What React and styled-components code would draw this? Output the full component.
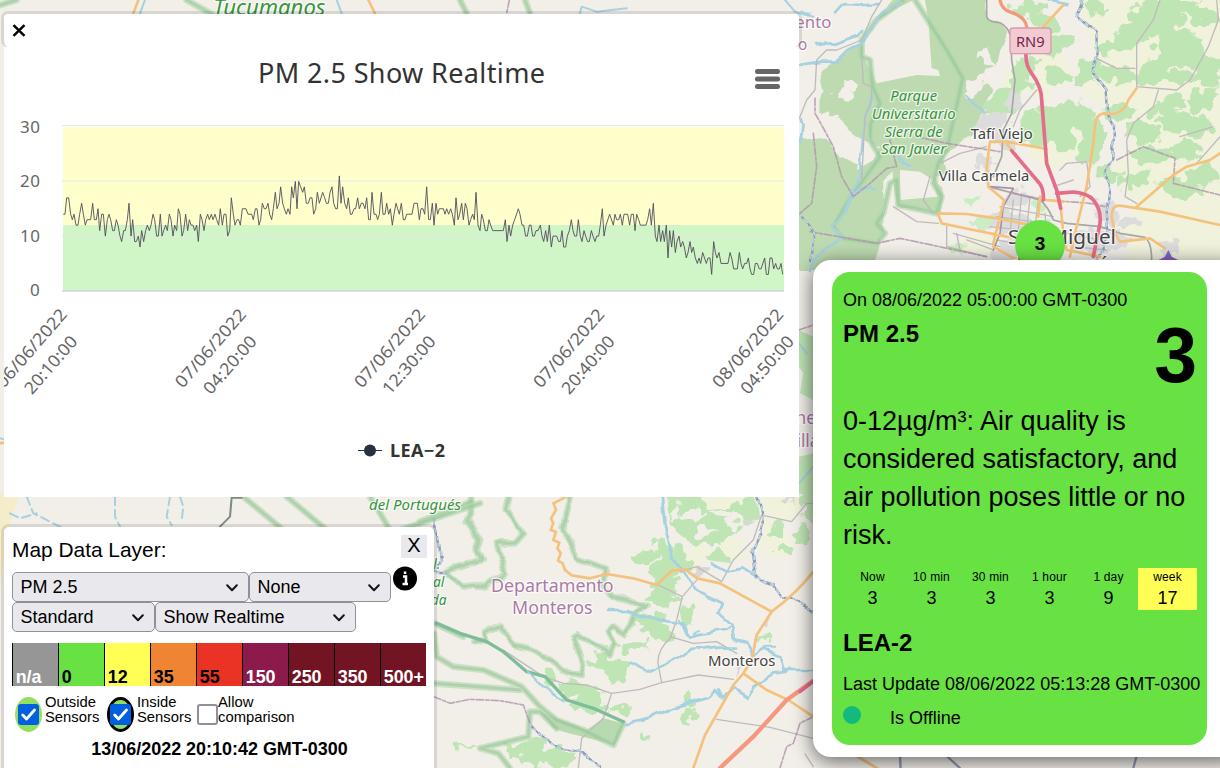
import React from "react";
import styled, { createGlobalStyle } from "styled-components";

const GlobalStyle = createGlobalStyle`
  * { box-sizing: border-box; }
  body { margin: 0; overflow: hidden; font-family: "Liberation Sans", Arial, sans-serif; color: #000; }
`;

const Page = styled.div`
  position: relative;
  width: 1220px;
  height: 768px;
  overflow: hidden;
  background: #f2efe9;
`;

const MapSvg = styled.svg`
  position: absolute;
  inset: 0;
  text { font-family: "Noto Sans", sans-serif; paint-order: stroke; stroke-linejoin: round; }
  path { fill: none; stroke-linejoin: round; stroke-linecap: round; }
`;

const GREEN = "#68e143";

/* ---------- map ---------- */

const Label = ({ x, y, size = 43, fill = "#444", italic, w, children }) => (
  <text x={x} y={y} fontSize={size} fill={fill} stroke="#fff" strokeOpacity=".7" strokeWidth="8"
    fontStyle={italic ? "italic" : "normal"} textAnchor="middle" textLength={w} lengthAdjust="spacingAndGlyphs">
    {children}
  </text>
);

// Filters that roughen the outline of fields and the course of rivers
const Rough = () => (
  <defs>
    <filter id="rough" filterUnits="userSpaceOnUse" x="-100" y="-100" width="1500" height="1100" colorInterpolationFilters="sRGB">
      <feTurbulence type="fractalNoise" baseFrequency="0.03" numOctaves="2" seed="4" />
      <feDisplacementMap in="SourceGraphic" scale="60" xChannelSelector="R" yChannelSelector="G" />
    </filter>
    <filter id="meander" filterUnits="userSpaceOnUse" x="-100" y="-100" width="1500" height="1100" colorInterpolationFilters="sRGB">
      <feTurbulence type="fractalNoise" baseFrequency="0.022" numOctaves="1" seed="9" />
      <feDisplacementMap in="SourceGraphic" scale="26" xChannelSelector="R" yChannelSelector="G" />
    </filter>
  </defs>
);

// Woodland or farmland patches: [x, y, width, height]
const Patches = ({ items, fill }) => (
  <g fill={fill} filter="url(#rough)">
    {items.map(([x, y, w, h], i) => {
      const n = 11;
      const pts = Array.from({ length: n }, (_, k) => {
        const a = (k / n) * Math.PI * 2;
        const r = 0.48 + 0.13 * Math.sin(k * 5.3 + i * 2.7);
        return `${(x + w / 2 + Math.cos(a) * w * r * 1.15).toFixed(1)},${(y + h / 2 + Math.sin(a) * h * r * 1.15).toFixed(1)}`;
      });
      return <polygon key={i} points={pts.join(" ")} />;
    })}
  </g>
);

const Park = ({ d }) => (
  <>
    <path d={d} stroke="#b2d6ac" strokeWidth="20" opacity=".6" />
    <path d={d} stroke="#8fc495" strokeWidth="9" opacity=".5" />
  </>
);
const Road = ({ d, c = "#f5c27d", w = 8 }) => <path d={d} stroke={c} strokeWidth={w} />;
const River = ({ d, w = 8, dash }) => <path d={d} stroke="#a5d1e0" strokeWidth={w} strokeDasharray={dash} filter="url(#meander)" />;
const Minor = ({ d }) => <path d={d} stroke="#bfbbbd" strokeWidth="4" />;
const Boundary = ({ d }) => <path d={d} stroke="#b193ae" strokeWidth="5" strokeDasharray="22 6 10 6" opacity=".8" />;
const Frontier = ({ d }) => (
  <g filter="url(#meander)">
    <path d={d} stroke="#9496b5" strokeWidth="7" />
    <path d={d} stroke="#b5dce8" strokeWidth="5" strokeDasharray="9 13" />
  </g>
);

const NorthEast = () => (
  <g transform="translate(800 0) scale(.33333)">
    <polygon fill="#f1f2dc" points="960,0 1260,0 1260,810 1000,810 960,700 1000,620 940,500 1000,430 960,350 930,240 890,150 850,70 830,0" />
    <Patches fill="#f1f2dc" items={[[690,60,90,60],[700,150,100,100],[700,380,160,110],[860,200,90,130],[700,230,60,60],[1030,630,190,130],[600,220,90,60],[500,700,100,60]]} />
    <g filter="url(#meander)">
      <polygon fill="#bddab1" points="310,-40 560,-40 562,60 610,70 625,100 600,150 590,200 560,210 545,240 580,270 560,310 585,335 540,345 520,400 470,430 435,470 445,520 400,530 428,560 422,640 290,615 280,510 250,550 250,720 190,735 140,770 100,780 50,810 -20,810 -20,640 40,570 35,460 0,410 60,420 90,500 160,520 230,440 205,400 215,300 180,230 185,120 230,60" />
      <polygon fill="#bddab1" points="60,210 180,130 205,220 190,250 215,300 210,430 150,400 115,350 50,340 70,270" />
      <polygon fill="#bddab1" points="-20,410 80,420 120,470 210,510 150,590 30,650 -20,630" />
      <polygon fill="#bddab1" points="40,700 130,690 240,730 220,800 30,800" />
    </g>
    <polygon fill="#f2efe9" points="340,0 375,0 385,60 395,205 415,210 420,228 350,225 230,250 190,170 190,110 230,60 300,20" />
    <polygon fill="#f2efe9" points="300,510 360,515 400,540 412,590 300,600" />
    <polygon fill="#f2efe9" points="190,430 240,440 220,480 170,510" />
    <Patches fill="#f2efe9" items={[[110,250,60,50],[530,160,50,30],[500,230,50,60],[60,340,50,40],[250,620,50,110]]} />
    <Patches fill="#bfe5b5" items={[[650,0,80,50],[690,45,90,50],[740,110,70,50],[850,0,60,40],[980,0,180,90],[960,70,70,80],[1050,100,160,90],[910,110,80,50],[1150,10,70,60],[640,170,70,60],[740,200,60,50],[560,270,90,80],[640,230,60,50],[650,340,100,90],[740,290,110,130],[830,330,70,80],[830,180,70,70],[900,200,100,50],[1000,180,110,60],[1090,210,110,40],[1180,180,80,70],[920,310,90,50],[980,370,90,60],[1060,290,90,50],[1080,340,150,70],[1160,270,90,60],[1000,440,120,50],[1110,430,90,50],[1170,490,80,70],[1060,540,130,50],[960,510,90,50],[890,500,60,40],[830,400,80,80],[1180,20,80,60],[760,390,60,60]]} />
    <Patches fill="#dddcdc" items={[[540,330,90,70],[580,400,60,40],[610,570,80,50],[540,640,180,60],[570,710,180,80],[820,680,150,80],[880,610,70,60],[960,640,60,50],[620,280,40,50],[1080,710,60,70],[530,455,40,70]]} />
    <Patches fill="#c9efc0" items={[[500,580,35,35],[520,655,60,22],[440,730,60,25],[700,600,30,40]]} />

    <Park d="M310,0 L230,60 L185,120 L185,170 L210,180 L218,260 L240,310 L212,370 L210,420 L240,470 L190,540 L155,585 L100,680 L130,715 L230,730 L255,700 L230,670 L250,640 L270,550 L290,540 L295,615 L410,640 L425,590 L400,550 L415,490 L440,450 L465,340 L488,235 L440,150 L345,0" />
    <River d="M0,35 L30,40 M50,130 L80,125 L100,135 L170,110 L190,90 M0,195 L60,185 L110,185 L145,150 L180,135 L245,40 L300,10 M105,40 L130,12 L190,15 L240,12 M0,350 L8,380 L0,430" />
    <River d="M215,295 L195,340 L190,400 L180,520 L155,590 L135,640 L95,680 L120,710 L70,760 L40,780 L30,810 M150,590 L210,560 L225,570 M290,460 L325,500 M500,290 L550,340 M750,0 L800,10" />
    <Minor d="M245,0 L215,50 L185,120 L110,150 L80,150 L50,180 L45,270 L20,300 L0,350 M185,170 L190,250 L215,260 L215,300 L195,350 L185,540 M1250,0 L1255,60 L1225,140 L1170,240 L1130,270 L1010,260 L1010,130 L1060,60 L1080,0 M890,175 L950,205 L1005,205 M1075,270 L1060,320 L1000,370 L980,420 L985,520 L975,590 L1010,610 M1140,410 L1240,380 M1190,490 L1260,410" />
    <Minor d="M710,270 L660,330 L640,380 M800,490 L860,485 L870,560 L840,590 M780,510 L800,490 M820,540 L760,560 M420,490 L480,460 L560,440 M390,530 L370,600 L400,640 M280,620 L350,665 L415,670 M640,600 L630,700 M665,580 L655,690 M690,590 L680,690 M715,600 L705,680 M740,700 L735,640 M600,620 L760,650 M590,650 L700,665 M570,680 L760,700 M590,720 L650,730 M800,700 L900,720 M820,740 L920,750 M460,700 L600,740 M480,750 L470,700 M500,720 L580,750 M440,680 L440,740 L560,770" />
    <path d="M560,0 L560,50 Q565,66 600,68 Q625,80 632,110 L635,180 L645,240 L635,340 L610,390 L605,470 L580,530 M565,560 L720,600 Q745,620 760,660 L800,670 L900,680 L960,700 L1035,712 Q1055,725 1055,780" stroke="#a8a6a6" strokeWidth="5" />
    <path d="M570,560 L640,565 L610,620 L600,700 L580,750" stroke="#a893a8" strokeWidth="5" />
    <Boundary d="M45,295 L45,340 L65,375 L100,440 L125,530 L160,590 L210,550 L260,505 L290,500 L270,420 M350,410 L440,430 L600,455 M40,400 L50,500 L35,610 L0,640 M30,695 L230,730 L300,715 L560,770 M640,580 L740,600 L870,610 L915,620 M950,480 L1030,440 L1125,475 L1120,550 L1260,585" />
    <Frontier d="M850,0 L830,50 L885,95 L890,160 L875,210 L920,270 L925,340 L942,370 L940,470 L920,510 L928,570 L920,640 L925,700 L890,780 M0,645 L30,675 L40,720 L30,780" />
    <Road d="M790,15 L730,80" />
    <Road d="M1010,265 L985,300 Q975,335 940,342 L910,340 Q888,345 886,370 L880,430 L860,560 L820,720 L810,770" />
    <Road d="M565,560 L560,500 L570,425 L620,425 L740,447 M565,560 L612,600 L600,650 L580,730 M415,640 L500,642 L590,655 L690,675 M415,645 L425,670 L520,690 L620,710 L690,720 M720,590 L715,650 M780,600 L790,700 L800,750 M735,600 L790,605 M620,430 L635,450 M1260,460 L1230,480 L1160,500 L1120,525 L1010,620 M935,650 Q935,615 960,617 L1080,635 L1260,675 M935,650 L945,700 L960,725 L1050,715 L1095,745 M580,740 L650,780 M800,750 L900,770" />
    <Road d="M600,0 Q605,30 635,38 Q675,50 680,80" c="#f4977b" w={10} />
    <Road d="M678,160 Q676,195 695,220 Q725,260 725,300 L740,490 L770,570 L782,625 M635,452 L720,552 Q732,570 730,600 M770,580 L820,576 Q865,580 880,600 Q905,630 900,670 L880,770" c="#e46d89" w={11} />

    <Label x={40} y={83} size={46} fill="#ac7ba5" w={108}>ento</Label>
    <Label x={8} y={150} size={46} fill="#ac7ba5">o</Label>
    <Label x={341} y={303} size={41} fill="#38953d" italic w={140}>Parque</Label>
    <Label x={341} y={357} size={41} fill="#38953d" italic w={252}>Universitario</Label>
    <Label x={341} y={410} size={41} fill="#38953d" italic w={174}>Sierra de</Label>
    <Label x={341} y={463} size={41} fill="#38953d" italic w={195}>San Javier</Label>
    <Label x={605} y={417} size={44} w={186}>Tafí Viejo</Label>
    <Label x={552} y={544} size={44} w={272}>Villa Carmela</Label>
    <Label x={786} y={732} size={62} w={324}>San Miguel</Label>
    <Label x={796} y={812} size={62} w={332}>de Tucumán</Label>
    <rect x="630" y="84" width="123" height="77" rx="9" fill="#f2cbd2" stroke="#d99cab" strokeWidth="4" />
    <text x="691" y="142" fontSize="45" fill="#752649" textAnchor="middle" textLength="86" lengthAdjust="spacingAndGlyphs">RN9</text>
    <polygon fill="#8461c4" points="1105,750 1115,770 1145,785 1065,785 1095,770" />
  </g>
);

const South = () => (
  <g transform="translate(420 490) scale(.33333)">
    <g filter="url(#meander)">
      <polygon fill="#bfe5b5" points="735,0 1000,0 1015,80 960,120 920,150 930,220 860,210 800,150 750,110" />
    </g>
    <polygon fill="#f1f2dc" points="1000,20 1145,20 1150,50 1115,95 1030,80" />
    <Patches fill="#f1f2dc" items={[[860,0,120,50],[1020,90,80,110],[780,170,90,50],[910,150,70,60]]} />
    <Patches fill="#f2efe9" items={[[790,60,60,25],[870,60,60,20],[830,110,50,25],[920,80,50,30],[750,40,30,40],[860,160,40,20],[740,110,30,40]]} />
    <Patches fill="#bfe5b5" items={[[645,180,70,35],[700,140,50,60],[690,200,95,60],[750,170,50,80],[700,260,80,42],[690,300,90,45],[770,350,55,60],[650,370,85,38],[670,405,85,45],[600,450,75,32],[510,500,65,45],[560,520,62,50],[430,570,95,50],[450,615,105,45],[570,650,65,20],[790,610,30,38],[775,655,52,44],[655,732,28,24],[1050,95,38,42],[1080,165,38,28],[1120,115,50,40],[1150,0,60,90],[1005,435,45,14],[260,750,115,45],[310,770,135,65],[380,780,85,35],[110,762,60,16],[370,548,45,35]]} />
    <Patches fill="#d9d7d6" items={[[820,225,50,35],[985,85,22,14],[1095,20,20,15],[1035,392,14,14],[950,537,15,15]]} />
    <polygon fill="#b9dab0" points="360,665 500,720 550,685 610,700 585,765 430,725 400,715" />
    <Minor d="M1200,40 L1160,40 L1115,95 L1025,75 L1000,150 L940,210 L905,275 L830,230 L780,245 M832,268 L787,320 L770,390 L750,445 Q712,480 714,520 L725,578 L835,555 L940,568 M715,285 L787,320 M750,440 L820,460 L890,455 L950,490 M725,578 L660,598 L575,610 L550,685 L485,745 L475,834 M250,480 L370,560 L430,580 L500,585 L575,610 M890,688 L1050,712 L1180,745" />
    <g filter="url(#meander)">
      <Park d="M160,-10 L140,95 L180,150 L170,180 L185,210 L80,240 L125,295 L160,280 L200,290 L255,245 L230,160 L285,160 L312,130 L260,55 L275,-10" />
      <Park d="M455,-10 L430,110 L470,205 L555,235 L550,280 L580,320 L680,345 L640,375 L620,435 L580,410 L565,430 L580,460 L570,490 L470,430 L460,435 L490,520 L480,555 L450,550 L330,475 L280,465 L240,410 L195,430 L200,455 L160,450" />
    </g>
    <Park d="M42,430 L50,500 L100,530 L190,540 L305,590 L360,650 L410,690 L490,720 L580,765 L610,700 M42,580 L300,600 M330,665 L360,665 L410,715 M42,400 L130,440 M330,665 L325,740 L180,775 L235,790 L270,834" />
    <Park d="M0,95 L155,35" />
    <path d="M50,400 L120,430 L200,455 L250,485 L320,545 L375,560 L440,630 L520,655 L610,695" stroke="#7dbd99" strokeWidth="10" />
    <River d="M722,-10 L735,110 L755,200 L800,260 L840,310 L905,340 L895,370 L935,405 L920,420 L850,430 L810,440 L790,400 L750,395 L650,375 L620,360 L570,360 M935,405 L945,450 L980,460 L1000,500 L1030,475 L1040,480 L1080,500 L1090,540 L1180,540 M630,520 L680,545 L720,525 L780,500 L810,480 L860,475 L890,470 L945,470 M875,220 L920,245 L970,235 L1010,260 M325,545 L370,590 L430,630 M620,700 L700,680 L770,650 L830,630 L870,620 L890,600 L910,625 L940,590 L980,620 L1000,590 L1060,550 L1100,545" />
    <River w={6} d="M780,390 L800,435 L820,435 L840,420 M850,475 L840,480 M900,600 L910,625 M1035,470 L1060,470" />
    <Frontier d="M1000,-10 L1025,75 L1025,130 L995,190 L1005,250 L1060,290 L1085,325 L1120,330 L1180,365 M38,75 L50,130 L60,210 L45,240 L80,240 M330,700 L370,745 L430,780 L490,790 L540,834" />
    <Boundary d="M42,620 L90,640 L150,628 L240,632 L310,645 L330,700 M1180,680 L1140,700 L1120,760 L1100,770 L1080,834" />
    <Road d="M440,20 L400,40 L408,60 L393,85 L400,100 L392,120 L408,125 L400,150 L418,158 L412,175 L422,190 L414,212 L428,220 L435,240" />
    <Road d="M435,240 L455,256 L510,265 L560,252 L640,265 L710,285 L755,242 L795,238 L832,265 L900,280 L1055,365 Q1130,310 1180,245 M1055,365 L1010,435 L995,510 L970,550 L940,585 L855,735 L820,834 M970,550 L1040,600 L1105,630 L1180,680" />
    <Road d="M1180,572 L1100,630 L1000,740 L900,834" c="#f4987f" w={13} />
    <Road d="M1140,605 L1210,550" c="#e46d89" w={10} />
    <Label x={397} y={305} size={56} fill="#ac7ba5" w={368}>Departamento</Label>
    <Label x={397} y={371} size={56} fill="#ac7ba5" w={242}>Monteros</Label>
    <Label x={965} y={527} size={44} w={202}>Monteros</Label>
    <Label x={50} y={238} size={41} fill="#38953d" italic>l.</Label>
    <Label x={56} y={292} size={41} fill="#38953d" italic>al</Label>
    <Label x={56} y={345} size={41} fill="#38953d" italic>da</Label>
  </g>
);

const Edges = () => (
  <g transform="scale(.33333)">
    <Park d="M0,15 L50,0 M560,0 L640,45 M1380,0 L1400,40 M1575,0 L1590,40" />
    <Road d="M415,0 L400,40 M1105,0 L1125,40" />
    <path d="M435,0 L420,40 M1010,0 L1025,40 M1740,40 L1745,20 L1790,35 L1880,25 M2355,0 L2385,35 L2440,50 M0,1315 L12,1318" stroke="#a5d1e0" strokeWidth="6" />
    <Boundary d="M1528,0 L1520,40" />
    <Label x={808} y={46} size={67} fill="#38953d" italic w={336}>Tucumanos</Label>
    <polygon fill="#f5edca" points="0,1480 12,1480 12,1490 55,1490 25,1590 0,1760" />
    <Road d="M0,1330 L12,1328" />
    <path d="M80,1490 L100,1540 L200,1590 M30,1540 L60,1555 L110,1540 M345,1490 L345,1550 L360,1580 M510,1490 L500,1550 L515,1575 M540,1490 L550,1520 L545,1560" stroke="#a5d1e0" strokeWidth="6" strokeDasharray="26 14" />
    <Park d="M730,1490 L850,1590 M860,1490 L980,1590 M1110,1490 L1170,1590 M1200,1590 L1440,1510" />
    <path d="M725,1493 L695,1493 L690,1550 L660,1580" stroke="#7c8a80" strokeWidth="6" />
    <Label x={1245} y={1530} size={41} fill="#38953d" italic w={276}>del Portugués</Label>
    <polygon fill="#bfe5b5" points="2397,990 2440,1010 2440,1200 2400,1180 2410,1120 2397,1100" />
    <polygon fill="#bfe5b5" points="2397,1370 2440,1360 2440,1490 2397,1480" />
    <Boundary d="M2397,990 L2440,975" />
    <Label x={2424} y={1272} size={52} fill="#ac7ba5">nei</Label>
    <Label x={2424} y={1340} size={52} fill="#ac7ba5">illa</Label>
    <path d="M2397,1030 L2420,1060 M2397,1450 L2440,1400" stroke="#a5d1e0" strokeWidth="6" />
    <Minor d="M2415,2262 L2440,2300 M2700,2262 L2700,2304" />
    <Road d="M2570,2268 L2640,2310" />
    <path d="M2700,2262 L2702,2304 M2840,2268 L2880,2304 M3410,2268 L3400,2304" stroke="#9496b5" strokeWidth="7" />
  </g>
);

const Marker = styled.div`
  position: absolute;
  left: 1015px;
  top: 220px;
  width: 50px;
  height: 50px;
  border-radius: 50%;
  background: ${GREEN};
  font: bold 19px/48px "Liberation Sans", sans-serif;
  text-align: center;
`;

/* ---------- chart ---------- */

const ChartPanel = styled.section`
  position: absolute;
  left: 1px;
  top: 11px;
  width: 801px;
`;
const ChartHead = styled.div`
  height: 36px;
  border: 3px solid rgba(0, 0, 0, 0.1);
  border-bottom: 0;
  border-radius: 7px;
  background: #fff;
  background-clip: padding-box;
  padding: 10px 8px;
`;
const ChartBody = styled.div`
  margin: 0 3px;
  height: 450px;
  background: #fff;
  svg { display: block; }
  text { font-family: "Noto Sans", "Open Sans", sans-serif; }
`;

// Each pair is [x in thirds of a pixel, reading]
const seriesA = "10,14 15,14 20,17 26,17 32,14 37,13 42,14 48,12 54,12 59,14 65,16 70,14 76,12 81,13 92,13 98,16 103,13 109,13 114,15 119,11 125,14 130,14 136,10 142,13 147,14 152,13 158,11 163,11 169,13 174,12 180,10 185,9 191,11 196,11 202,13 207,16 213,10 218,13 224,9 229,9 235,10 240,8 245,11 251,9 257,11 262,12 268,11 273,12 279,14 284,13 290,10 295,10 301,14 306,10 311,11 317,12 322,11 328,14 333,13 339,10 344,12 350,11 355,15 360,14 366,10 371,11 377,14 383,11 388,13 393,12 399,12 404,11 410,12 415,9 421,14 426,13 432,11 437,13 443,14 448,13 454,14 459,13 465,14 470,13 476,12 481,15 487,12 492,14 498,14 503,10 509,11 514,17 520,14 525,12 531,13 536,13 541,12 547,15 558,15 564,14 575,14 580,13 586,15 591,15 597,12 602,13 607,16 613,15 618,15 624,16 629,14 635,13 640,15 646,18 651,15 657,16 662,19 668,16 673,15 679,14 684,15";
const seriesB = "0,14 5,19 10,17 16,20 21,15 26,20 32,19 38,18 43,19 49,16 55,16 60,17 66,17 71,14 77,15 82,18 88,16 98,18 104,17 109,16 115,16 120,18 126,19 131,16 137,15 142,15 148,21 153,16 158,19 164,16 170,15 175,17 181,14 186,14 192,15 197,15 203,17 208,15 214,16 219,16 225,15 230,17 236,13 241,13 246,18 252,14 258,14 263,13 268,14 274,18 279,14 285,14 290,16 296,14 301,15 307,12 312,14 318,16 323,15 328,14 334,16 340,13 345,13 350,14 366,14 372,16 382,16 388,13 393,15 399,15 404,14 410,19 416,13 421,13 427,16 432,12 438,16 443,14 448,15 460,15 465,14 470,15 476,14 482,15 487,14 493,12 498,17 504,13 509,14 515,16 520,13 526,16 531,15 537,12 542,13 548,14 553,13 558,18 564,12 570,11 575,14 580,13 586,11 592,11 597,13 602,12 608,11 640,11 646,13 651,9 657,12 662,10 668,12 674,13 685,15 690,14 696,12 701,12 707,10 712,10 718,12";
const seriesC = "3,12 8,10 13,10 18,11 24,11 31,12 36,10 41,9 47,11 52,9 58,12 64,8 69,10 80,10 86,9 91,9 96,11 101,8 107,8 112,10 118,11 124,13 129,11 134,10 140,10 145,13 151,10 156,9 162,11 167,10 173,9 178,9 184,11 189,10 195,9 200,10 206,10 211,12 217,15 222,10 228,12 239,14 250,12 255,14 260,13 266,13 271,14 277,12 282,14 293,14 299,12 304,14 310,14 315,11 320,14 326,13 331,12 348,12 353,13 359,15 364,12 370,16 376,10 381,9 387,12 392,9 398,11 403,9 409,12 414,6 419,11 425,8 430,11 436,7 441,9 447,10 452,8 458,9 463,8 469,6 474,7 480,9 485,7 490,8 496,6 502,5 507,6 512,5 518,7 529,5 534,6 540,6 545,3 551,9 556,7 561,6 567,7 573,5 594,5 600,7 605,6 611,4 622,4 628,7 633,5 638,4 644,5 650,5 655,6 660,4 665,3 671,3 676,5 682,5 688,4 693,4 704,6 709,3 715,3 720,6 726,6 731,4 737,5 742,4 748,4 753,5 758,3";

const toPoints = (text, offset) =>
  text.split(" ").map((p) => {
    const [x, v] = p.split(",").map(Number);
    return `${(offset + x / 3).toFixed(2)},${(290.8 - v * 5.47).toFixed(2)}`;
  });
const linePoints = [
  ...toPoints(seriesA, 60),
  ...toPoints(seriesB, 290),
  ...toPoints(seriesC, 530),
].join(" ");

const ticks = [
  ["06/06/2022", "20:10:00"],
  ["07/06/2022", "04:20:00"],
  ["07/06/2022", "12:30:00"],
  ["07/06/2022", "20:40:00"],
  ["08/06/2022", "04:50:00"],
];

const Chart = () => (
  <svg width="795" height="450" viewBox="4 47 795 450">
    <text x="258" y="83" fontSize="27" fill="#333" textLength="287">PM 2.5 Show Realtime</text>
    <g fill="#666">
      {[69, 76.5, 84].map((y) => <rect key={y} x="755" y={y} width="25" height="5" rx="2.3" />)}
    </g>
    <rect x="63" y="127" width="721" height="98" fill="#ffffcb" />
    <rect x="63" y="225" width="721" height="66" fill="#d0f5c6" />
    {[125.5, 181, 236.5].map((y) => <path key={y} d={`M62,${y}H784`} stroke="#e6e6e6" />)}
    <path d="M62,291H784" stroke="#ccd6eb" strokeWidth="1.5" />
    <polyline points={linePoints} fill="none" stroke="#544d5c" strokeWidth="1" strokeLinejoin="round" opacity=".9" />
    <g fontSize="17" fill="#666">
      <text x="20" y="133" textLength="20">30</text>
      <text x="20" y="187" textLength="20">20</text>
      <text x="20" y="242" textLength="20">10</text>
      <text x="30" y="296">0</text>
      {ticks.map(([day, time], i) => (
        <g key={i} transform={`translate(${i * 179.1} 0)`}>
          <text transform="translate(68 315) rotate(-49)" textAnchor="end" textLength="98" lengthAdjust="spacingAndGlyphs">{day}</text>
          <text transform="translate(78.5 342) rotate(-49)" textAnchor="end" textLength="71" lengthAdjust="spacingAndGlyphs">{time}</text>
        </g>
      ))}
    </g>
    <path d="M358,450.5H382" stroke="#333" />
    <circle cx="370" cy="450.5" r="6" fill="#28323f" />
    <text x="390" y="457" fontSize="18" fontWeight="bold" fill="#333" textLength="55">LEA−2</text>
  </svg>
);

/* ---------- layer panel ---------- */

const LayerPanel = styled.section`
  position: absolute;
  left: 1px;
  top: 524px;
  width: 436px;
  height: 260px;
  border: 3px solid rgba(0, 0, 0, 0.1);
  border-radius: 8px;
  background: #fff;
  background-clip: padding-box;
  padding: 8px 7px 0 8px;
`;
const LayerHead = styled.div`
  display: flex;
  justify-content: space-between;
  height: 37px;
`;
const LayerTitle = styled.div`
  font-size: 20.9px;
  line-height: 30px;
`;
const CloseButton = styled.button`
  width: 26px;
  height: 23px;
  border: 0;
  padding: 0;
  background: #e9e9ed;
  font: 20px/20px "Liberation Sans", sans-serif;
  display: flex;
  justify-content: center;
`;
const SelectRow = styled.div`
  display: flex;
  height: 30px;
  gap: 0;
`;
const Select = styled.div`
  width: ${(p) => p.$w}px;
  height: 30px;
  display: flex;
  align-items: center;
  justify-content: space-between;
  padding: 1px 10px 0 7.5px;
  border: 1px solid #8f8f9d;
  border-radius: 5px;
  background: #e9e9ed;
  font-size: 18px;
`;
const Scale = styled.div`
  display: flex;
  margin-top: 11px;
  width: 414px;
`;
const Band = styled.div`
  flex: 1;
  height: 43px;
  display: flex;
  align-items: flex-end;
  border-left: 1px solid #000;
  padding-left: 2.7px;
  background: ${(p) => p.$bg};
  color: ${(p) => p.$fg};
  font-weight: bold;
  font-size: 17.9px;
  line-height: 17px;
`;
const Checks = styled.div`
  display: flex;
  margin-top: 9px;
  height: 38px;
  padding-left: 3px;
`;
const Check = styled.label`
  display: flex;
  width: ${(p) => p.$w}px;
  font-size: 14.8px;
  line-height: 15px;
`;
const Ring = styled.span`
  flex: none;
  width: 27px;
  height: 35px;
  margin: 2px ${(p) => p.$gap}px 0 0;
  border-radius: 50%;
  border: 3px solid ${(p) => p.$ring};
  background: ${(p) => p.$bg};
  display: flex;
  align-items: center;
  justify-content: center;
`;
const Box = styled.span`
  flex: none;
  width: 21px;
  height: 21px;
  margin-top: ${(p) => (p.$on ? 0 : 9)}px;
  border-radius: 3px;
  border: ${(p) => (p.$on ? "0" : "2.5px solid #8f8f9d")};
  background: ${(p) => (p.$on ? "#0060df" : "#fff")};
`;
const Clock = styled.div`
  text-align: center;
  font-weight: bold;
  font-size: 17.95px;
  line-height: 22px;
  margin-top: 5px;
`;
const InfoIcon = styled.svg`
  margin: -6px 0 0 2px;
`;

const Dropdown = ({ w, children }) => (
  <Select $w={w}>
    {children}
    <svg width="12" height="8" viewBox="0 0 12 8">
      <path d="M1.2 1.2L6 6.2L10.8 1.2" fill="none" stroke="#15141a" strokeWidth="2" strokeLinecap="round" strokeLinejoin="round" />
    </svg>
  </Select>
);
const Tick = () => (
  <Box $on>
    <svg width="21" height="21" viewBox="0 0 21 21" display="block">
      <path d="M4.7 11L8.5 15L16.5 6" fill="none" stroke="#fff" strokeWidth="2.8" strokeLinecap="round" strokeLinejoin="round" />
    </svg>
  </Box>
);

const bands = [
  ["n/a", "#969696", "#fff"],
  ["0", GREEN, "#000"],
  ["12", "#ffff55", "#000"],
  ["35", "#ef8533", "#000"],
  ["55", "#ea3324", "#000"],
  ["150", "#8c1a4b", "#fff"],
  ["250", "#731425", "#fff"],
  ["350", "#731425", "#fff"],
  ["500+", "#731425", "#fff"],
];

/* ---------- sensor card ---------- */

const Card = styled.aside`
  position: absolute;
  left: 813px;
  top: 260px;
  width: 430px;
  height: 497px;
  padding: 12px 19px;
  border-radius: 18px;
  background: #fff;
  box-shadow: 0 4px 20px rgba(0, 0, 0, 0.6);
`;
const Reading = styled.div`
  width: 375px;
  height: 473px;
  padding: 18px 0 0 11px;
  border-radius: 18px;
  background: ${GREEN};
  font-size: 18px;
`;
const Stamp = styled.div`
  line-height: 20px;
  margin-top: ${(p) => p.$top || 0}px;
  white-space: nowrap;
`;
const Metric = styled.div`
  display: flex;
  justify-content: space-between;
  height: 92px;
  padding: 12px 10px 0 0;
`;
const Heading = styled.h2`
  margin: 0;
  font-size: 24px;
  line-height: 24px;
`;
const Big = styled.div`
  font-size: 77px;
  line-height: 76px;
  font-weight: bold;
  margin-top: -5px;
`;
const Advice = styled.p`
  margin: 0;
  width: 350px;
  font-size: 27px;
  line-height: 38px;
`;
const Averages = styled.div`
  display: flex;
  margin: 14px 0 21px;
`;
const Average = styled.div`
  width: 59px;
  height: 42px;
  padding-top: 2px;
  text-align: center;
  background: ${(p) => p.$bg || "transparent"};
  line-height: 22px;
  small { display: block; font-size: 12px; letter-spacing: 0.15px; line-height: 15px; margin-bottom: 2px; }
`;
const Status = styled.div`
  display: flex;
  align-items: center;
  gap: 29px;
  margin-top: 14px;
`;
const Dot = styled.span`
  width: 18px;
  height: 18px;
  margin-top: -7px;
  border-radius: 50%;
  background: #13b97f;
`;

export default function App() {
  return (
    <Page>
      <GlobalStyle />
      <MapSvg width="1220" height="768" viewBox="0 0 1220 768">
        <Rough />
        <NorthEast />
        <South />
        <Edges />
      </MapSvg>
      <Marker>3</Marker>

      <Card>
        <Reading>
          <Stamp>On 08/06/2022 05:00:00 GMT-0300</Stamp>
          <Metric>
            <Heading>PM 2.5</Heading>
            <Big>3</Big>
          </Metric>
          <Advice>0-12µg/m³: Air quality is considered satisfactory, and air pollution poses little or no risk.</Advice>
          <Averages>
            <Average><small>Now</small>3</Average>
            <Average><small>10 min</small>3</Average>
            <Average><small>30 min</small>3</Average>
            <Average><small>1 hour</small>3</Average>
            <Average><small>1 day</small>9</Average>
            <Average $bg="#ffff55"><small>week</small>17</Average>
          </Averages>
          <Heading>LEA-2</Heading>
          <Stamp $top={19}>Last Update 08/06/2022 05:13:28 GMT-0300</Stamp>
          <Status><Dot />Is Offline</Status>
        </Reading>
      </Card>

      <ChartPanel>
        <ChartHead>
          <svg width="14" height="13" viewBox="0 0 14 13" display="block">
            <path d="M1.5 1.2L12.5 11.8M12.5 1.2L1.5 11.8" stroke="#000" strokeWidth="2.5" />
          </svg>
        </ChartHead>
        <ChartBody><Chart /></ChartBody>
      </ChartPanel>

      <LayerPanel>
        <LayerHead>
          <LayerTitle>Map Data Layer:</LayerTitle>
          <CloseButton>X</CloseButton>
        </LayerHead>
        <SelectRow>
          <Dropdown w={237}>PM 2.5</Dropdown>
          <Dropdown w={142}>None</Dropdown>
          <InfoIcon width="24" height="25" viewBox="0 0 24 25">
            <circle cx="12" cy="12.5" r="12" />
            <path d="M10 10.5H13V17M9.5 18H15M10.8 6.8H13.3" stroke="#fff" strokeWidth="2.5" fill="none" />
          </InfoIcon>
        </SelectRow>
        <SelectRow>
          <Dropdown w={143}>Standard</Dropdown>
          <Dropdown w={201}>Show Realtime</Dropdown>
        </SelectRow>
        <Scale>
          {bands.map(([t, bg, fg]) => <Band key={t} $bg={bg} $fg={fg}>{t}</Band>)}
        </Scale>
        <Checks>
          <Check $w={92}>
            <Ring $ring="#93e060" $bg="#93e060" $gap={3}><Tick /></Ring>
            <span>Outside<br />Sensors</span>
          </Check>
          <Check $w={90}>
            <Ring $ring="#000" $bg="#93e060" $gap={3}><Tick /></Ring>
            <span>Inside<br />Sensors</span>
          </Check>
          <Check $w={110}>
            <Box />
            <span>Allow<br />comparison</span>
          </Check>
        </Checks>
        <Clock>13/06/2022 20:10:42 GMT-0300</Clock>
      </LayerPanel>
    </Page>
  );
}
